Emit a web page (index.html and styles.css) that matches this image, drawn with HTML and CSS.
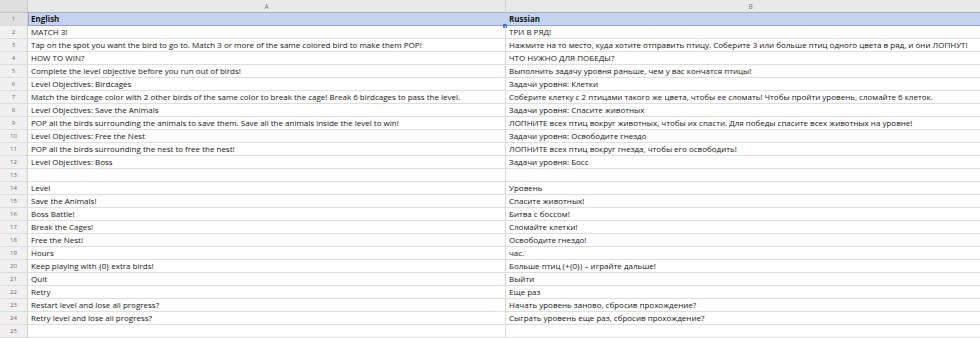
FILE: index.html
```html
<!DOCTYPE html>
<html>
<head>
<meta charset="utf-8">
<link rel="stylesheet" href="styles.css">
</head>
<body>
<div class="sheet">
  <div class="corner"></div><div class="colhead">A</div><div class="colhead">B</div>

  <div class="rn rn-sel">1</div><div class="c sel sel-first b">English</div><div class="c sel b">Russian<span class="handle"></span></div>
  <div class="rn">2</div><div class="c">MATCH 3!</div><div class="c">ТРИ В РЯД!</div>
  <div class="rn">3</div><div class="c">Tap on the spot you want the bird to go to. Match 3 or more of the same colored bird to make them POP!</div><div class="c">Нажмите на то место, куда хотите отправить птицу. Соберите 3 или больше птиц одного цвета в ряд, и они ЛОПНУТ!</div>
  <div class="rn">4</div><div class="c">HOW TO WIN?</div><div class="c">ЧТО НУЖНО ДЛЯ ПОБЕДЫ?</div>
  <div class="rn">5</div><div class="c">Complete the level objective before you run out of birds!</div><div class="c">Выполнить задачу уровня раньше, чем у вас кончатся птицы!</div>
  <div class="rn">6</div><div class="c">Level Objectives: Birdcages</div><div class="c">Задачи уровня: Клетки</div>
  <div class="rn">7</div><div class="c">Match the birdcage color with 2 other birds of the same color to break the cage! Break 6 birdcages to pass the level.</div><div class="c">Соберите клетку с 2 птицами такого же цвета, чтобы ее сломать! Чтобы пройти уровень, сломайте 6 клеток.</div>
  <div class="rn">8</div><div class="c">Level Objectives: Save the Animals</div><div class="c">Задачи уровня: Спасите животных</div>
  <div class="rn">9</div><div class="c">POP all the birds surrounding the animals to save them. Save all the animals inside the level to win!</div><div class="c">ЛОПНИТЕ всех птиц вокруг животных, чтобы их спасти. Для победы спасите всех животных на уровне!</div>
  <div class="rn">10</div><div class="c">Level Objectives: Free the Nest</div><div class="c">Задачи уровня: Освободите гнездо</div>
  <div class="rn">11</div><div class="c">POP all the birds surrounding the nest to free the nest!</div><div class="c">ЛОПНИТЕ всех птиц вокруг гнезда, чтобы его освободить!</div>
  <div class="rn">12</div><div class="c">Level Objectives: Boss</div><div class="c">Задачи уровня: Босс</div>
  <div class="rn">13</div><div class="c"></div><div class="c"></div>
  <div class="rn">14</div><div class="c">Level</div><div class="c">Уровень</div>
  <div class="rn">15</div><div class="c">Save the Animals!</div><div class="c">Спасите животных!</div>
  <div class="rn">16</div><div class="c">Boss Battle!</div><div class="c">Битва с боссом!</div>
  <div class="rn">17</div><div class="c">Break the Cages!</div><div class="c">Сломайте клетки!</div>
  <div class="rn">18</div><div class="c">Free the Nest!</div><div class="c">Освободите гнездо!</div>
  <div class="rn">19</div><div class="c">Hours</div><div class="c">час.</div>
  <div class="rn">20</div><div class="c">Keep playing with {0} extra birds!</div><div class="c">Больше птиц (+{0}) – играйте дальше!</div>
  <div class="rn">21</div><div class="c">Quit</div><div class="c">Выйти</div>
  <div class="rn">22</div><div class="c">Retry</div><div class="c">Еще раз</div>
  <div class="rn">23</div><div class="c">Restart level and lose all progress?</div><div class="c">Начать уровень заново, сбросив прохождение?</div>
  <div class="rn">24</div><div class="c">Retry level and lose all progress?</div><div class="c">Сыграть уровень еще раз, сбросив прохождение?</div>
  <div class="rn">25</div><div class="c"></div><div class="c"></div>
</div>
</body>
</html>
```

FILE: styles.css
```css
html, body {
  margin: 0;
  padding: 0;
  background: #ffffff;
  overflow: hidden;
}
body {
  width: 980px;
  height: 338px;
  font-family: "Open Sans", "Noto Sans", sans-serif;
}
.sheet {
  display: grid;
  grid-template-columns: 28px 478px 490px;
  grid-auto-rows: 13px;
  width: 996px;
}
.corner {
  background: #dedede;
  border-right: 1px solid #c8c8c8;
  border-bottom: 1px solid #c8c8c8;
}
.colhead {
  background: #e9e9e9;
  border-right: 1px solid #d0d0d0;
  border-bottom: 1px solid #a3abc6;
  color: #7a7a7a;
  font-size: 6.5px;
  line-height: 13px;
  text-align: center;
}
.rn {
  background: #f0f0f0;
  border-right: 1px solid #cfcfcf;
  border-bottom: 1px solid #dcdcdc;
  color: #6a6a6a;
  font-size: 6px;
  line-height: 12px;
  text-align: center;
}
.rn-sel {
  background: #e0e0e0;
}
.c {
  position: relative;
  box-sizing: border-box;
  border-right: 1px solid #d8d8d8;
  border-bottom: 1px solid #dedede;
  padding-left: 3px;
  color: #161616;
  font-size: 8px;
  line-height: 12px;
  white-space: nowrap;
  overflow: visible;
}
.sel {
  background: #c5d3ee;
  border-bottom: 1px solid #8fa6d8;
  border-right-color: #c5d3ee;
}
.sel-first {
  box-shadow: inset 1px 0 0 #8fa6d8;
}
.b {
  font-weight: 700;
}
.handle {
  position: absolute;
  left: -3px;
  bottom: -3px;
  width: 4px;
  height: 4px;
  background: #4a78c8;
}
```
